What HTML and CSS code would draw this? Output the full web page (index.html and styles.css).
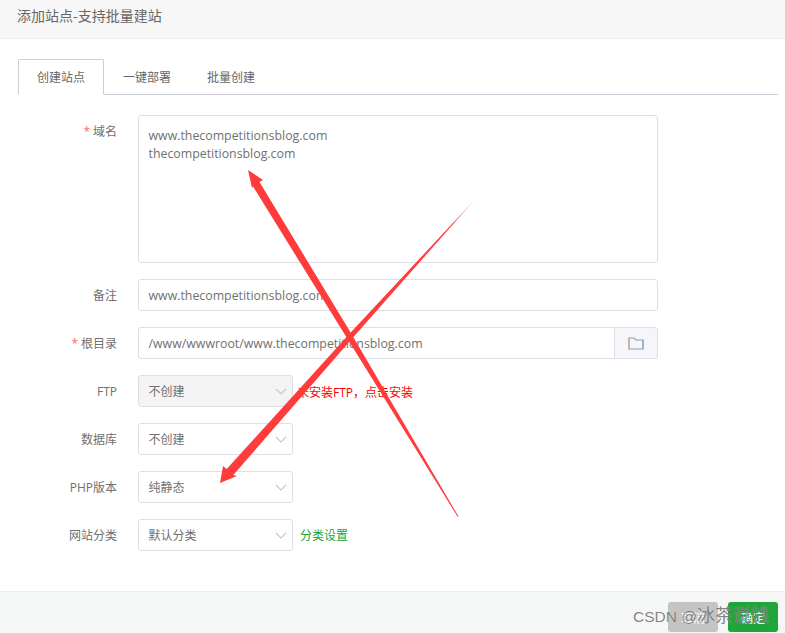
FILE: index.html
```html
<!DOCTYPE html>
<html lang="zh-CN">
<head>
<meta charset="utf-8">
<title>添加站点</title>
<link rel="stylesheet" href="styles.css">
</head>
<body>
<div class="page">
  <header class="head">添加站点-支持批量建站</header>
  <main class="body">
    <div class="tabs">
      <div class="tab active">创建站点</div>
      <div class="tab">一键部署</div>
      <div class="tab">批量创建</div>
    </div>
    <form class="form">
      <div class="row">
        <label class="label req tall">域名</label>
        <div class="control area">www.thecompetitionsblog.com<br>thecompetitionsblog.com</div>
      </div>
      <div class="row">
        <label class="label">备注</label>
        <div class="control wide">www.thecompetitionsblog.com</div>
      </div>
      <div class="row">
        <label class="label req">根目录</label>
        <div class="group">
          <div class="control grow">/www/wwwroot/www.thecompetitionsblog.com</div>
          <div class="addon">
            <svg width="16" height="13" viewBox="0 0 16 13"><path d="M1 12V1h5l2 2h7v9z" fill="none" stroke="#8d9cb5" stroke-width="1.2"/><path d="M1 1v11" stroke="#d9a77f"/><path d="M15 3v9" stroke="#7fa8d9"/></svg>
          </div>
        </div>
      </div>
      <div class="row">
        <label class="label">FTP</label>
        <div class="control select disabled">不创建<svg class="chev" width="12" height="7" viewBox="0 0 12 7"><path d="M1 1l5 5 5-5"/></svg></div>
        <a class="note red">未安装FTP，点击安装</a>
      </div>
      <div class="row">
        <label class="label">数据库</label>
        <div class="control select">不创建<svg class="chev" width="12" height="7" viewBox="0 0 12 7"><path d="M1 1l5 5 5-5"/></svg></div>
      </div>
      <div class="row">
        <label class="label">PHP版本</label>
        <div class="control select">纯静态<svg class="chev" width="12" height="7" viewBox="0 0 12 7"><path d="M1 1l5 5 5-5"/></svg></div>
      </div>
      <div class="row">
        <label class="label">网站分类</label>
        <div class="control select">默认分类<svg class="chev" width="12" height="7" viewBox="0 0 12 7"><path d="M1 1l5 5 5-5"/></svg></div>
        <a class="note green">分类设置</a>
      </div>
    </form>
  </main>
  <footer class="foot">
    <button class="btn gray" type="button">取消</button>
    <button class="btn ok" type="button">确定</button>
  </footer>
  <svg class="marks" width="785" height="633" viewBox="0 0 785 633">
    <defs>
      <linearGradient id="fade" gradientUnits="userSpaceOnUse" x1="479" y1="195" x2="452" y2="225">
        <stop offset="0" stop-color="#ff3b3b" stop-opacity="0"/>
        <stop offset="1" stop-color="#ff3b3b"/>
      </linearGradient>
    </defs>
    <polygon class="mark" points="248,170 263,180 259.5,182 350.6,332.4 458.6,516.6 457.8,517 345.4,335.6 253,186.5 252,188"/>
    <polygon fill="url(#fade)" points="479,195 351.9,338.7 233.3,475 237,476 220,483 223,466 226.7,469 348.1,335.3"/>
  </svg>
  <div class="wm">CSDN @<span class="wm-cjk">冰茶说钱</span></div>
</div>
</body>
</html>
```

FILE: styles.css
```css
* { box-sizing: border-box; }
html, body { margin: 0; padding: 0; }
body {
  background: #fff;
  color: #707070;
  font-family: "Open Sans", "Noto Sans CJK SC", sans-serif;
  font-size: 12px;
}
.page {
  position: relative;
  width: 785px;
  height: 633px;
  overflow: hidden;
  display: flex;
  flex-direction: column;
}
.head {
  height: 39px;
  padding: 0 17px 8px;
  display: flex;
  align-items: center;
  background: #f7f7f7;
  border-bottom: 1px solid #eee;
  font-size: 14px;
  color: #666;
  font-family: "Noto Sans CJK SC", sans-serif;
}
.body {
  flex: 1;
  padding: 20px 7px 0 18px;
}
.tabs {
  display: flex;
  height: 36px;
  border-bottom: 1px solid #cfccd9;
}
.tab {
  height: 36px;
  padding: 0 18px;
  line-height: 36px;
  font-family: "Noto Sans CJK SC", sans-serif;
  color: #666;
}
.tab.active {
  width: 86px;
  margin-right: 1px;
  background: #fff;
  border: 1px solid #cfccd9;
  border-bottom-color: #fff;
  border-radius: 2px 2px 0 0;
  line-height: 34px;
}
.form {
  display: flex;
  flex-direction: column;
  gap: 16px;
  margin-top: 20px;
}
.row {
  display: flex;
  align-items: flex-start;
}
.label {
  width: 99px;
  height: 32px;
  line-height: 33px;
  text-align: right;
  color: #707070;
  margin-right: 21px;
}
.tall { line-height: 34px; }
.req::before {
  content: "*";
  color: #f56c6c;
  margin-right: 3px;
}
.control {
  height: 32px;
  line-height: 31px;
  padding: 0 9.5px;
  border: 1px solid #dcdfe6;
  border-radius: 3px;
  background: #fff;
  font-size: 12.35px;
  color: #707070;
}
.area {
  width: 520px;
  height: 148px;
  padding-top: 11px;
  line-height: 18px;
}
.wide { width: 520px; }
.group { display: flex; width: 520px; }
.grow {
  flex: 1;
  border-right: 0;
  border-radius: 3px 0 0 3px;
}
.addon {
  width: 44px;
  height: 32px;
  display: flex;
  align-items: center;
  justify-content: center;
  background: #f4f6fa;
  border: 1px solid #dcdfe6;
  border-radius: 0 3px 3px 0;
}
.select {
  position: relative;
  width: 155px;
  font-size: 12px;
  line-height: 32px;
}
.disabled { background: #f4f4f4; }
.chev {
  position: absolute;
  right: 5px;
  top: 12px;
  fill: none;
  stroke: #c6c8ce;
  stroke-width: 1.2;
}
.note {
  margin-left: 7px;
  height: 32px;
  line-height: 34px;
}
.red { color: #f00; margin-left: 4px; line-height: 35px; }
.green { color: #20a53a; }
.foot {
  height: 42px;
  display: flex;
  justify-content: flex-end;
  align-items: flex-start;
  gap: 10px;
  padding: 10px 7px 0 0;
  background: #f5f7f7;
  border-top: 1px solid #eee;
}
.btn {
  width: 50px;
  height: 30px;
  border: 0;
  border-radius: 3px;
  color: #fff;
  font: 12px "Noto Sans CJK SC", sans-serif;
}
.gray { background: #c4c4c4; }
.ok { background: #20a53a; }
.marks {
  position: absolute;
  left: 0;
  top: 0;
  pointer-events: none;
}
.mark { fill: #ff3b3b; }
.wm {
  position: absolute;
  left: 633px;
  top: 601px;
  font-family: "Liberation Sans", "Noto Sans CJK SC", sans-serif;
  font-size: 15.5px;
  color: rgba(85, 85, 85, 0.72);
  text-shadow: 0 0 1px rgba(255, 255, 255, 0.6);
  white-space: nowrap;
}
.wm-cjk { font-size: 18px; }
```
